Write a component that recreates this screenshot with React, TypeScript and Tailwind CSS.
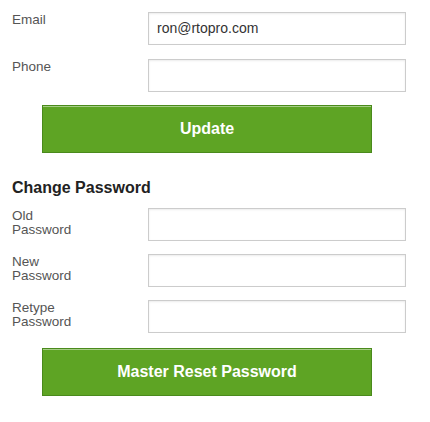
import React from "react";

function Field({ label, value, top }: { label: React.ReactNode; value?: string; top?: string }) {
  return (
    <div className={`flex items-start ${top ?? ""}`}>
      <div className="w-[136px] shrink-0 pt-[1px] text-[13.5px] leading-[14px] text-[#555]">{label}</div>
      <div className="h-[33px] w-[258px] border border-[#cccccc] bg-white px-2 text-[14px] leading-[31px] text-[#333] shadow-[inset_0_1px_2px_rgba(0,0,0,0.08)]">
        {value}
      </div>
    </div>
  );
}

function GreenButton({ children }: { children: React.ReactNode }) {
  return (
    <div className="ml-[30px] flex h-[48px] w-[330px] items-center justify-center border border-[#4a8a1c] bg-[#5ea424] text-[16px] font-bold text-white shadow-[inset_0_1px_0_rgba(255,255,255,0.45)]">
      {children}
    </div>
  );
}

export default function App() {
  return (
    <div className="h-[422px] w-[430px] bg-white px-3 pt-[12px]" style={{ fontFamily: '"Liberation Sans", Arial, sans-serif' }}>
      <Field label="Email" value="ron@rtopro.com" />
      <Field label="Phone" top="mt-[14px]" />
      <div className="mt-[13px]">
        <GreenButton>Update</GreenButton>
      </div>
      <div className="mt-[26px] text-[16px] font-bold leading-[18px] text-[#222]">Change Password</div>
      <Field label={<>Old<br />Password</>} top="mt-[11px]" />
      <Field label={<>New<br />Password</>} top="mt-[13px]" />
      <Field label={<>Retype<br />Password</>} top="mt-[13px]" />
      <div className="mt-[15px]">
        <GreenButton>Master Reset Password</GreenButton>
      </div>
    </div>
  );
}
